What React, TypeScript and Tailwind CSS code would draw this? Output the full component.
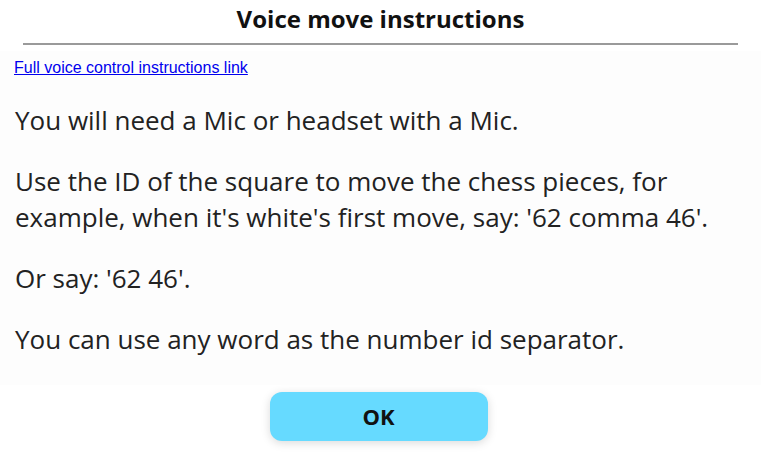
import React from 'react';

const App: React.FC = () => {
  return (
    <div className="w-[761px] h-[472px] bg-white flex flex-col text-[#222]" style={{ fontFamily: '"Open Sans", sans-serif' }}>
      <h2 className="text-center text-[24px] font-bold leading-[38px] text-[#111]">Voice move instructions</h2>
      <div className="mx-[23px] mt-[5px] h-[2px] bg-[#9a9a9a]" />
      <div className="bg-[#fdfdfd] px-[15px] pt-[4px] pb-[28px] mt-[6px]">
        <a href="#" className="text-[16px] text-[#0000ee] underline -ml-[1px]" style={{ fontFamily: '"Liberation Sans", Arial, sans-serif' }}>
          Full voice control instructions link
        </a>
        <div className="text-[26px] leading-[36px] mt-[22px] flex flex-col gap-[25px]">
          <p>You will need a Mic or headset with a Mic.</p>
          <p>Use the ID of the square to move the chess pieces, for example, when it's white's first move, say: '62 comma 46'.</p>
          <p>Or say: '62 46'.</p>
          <p>You can use any word as the number id separator.</p>
        </div>
      </div>
      <div className="flex justify-center pt-[7px]">
        <button className="mr-[4px] w-[218px] h-[49px] rounded-[12px] bg-[#66daff] text-[22px] font-bold text-[#111] shadow-[0_2px_10px_rgba(0,0,0,0.15)]">
          OK
        </button>
      </div>
    </div>
  );
};

export default App;
